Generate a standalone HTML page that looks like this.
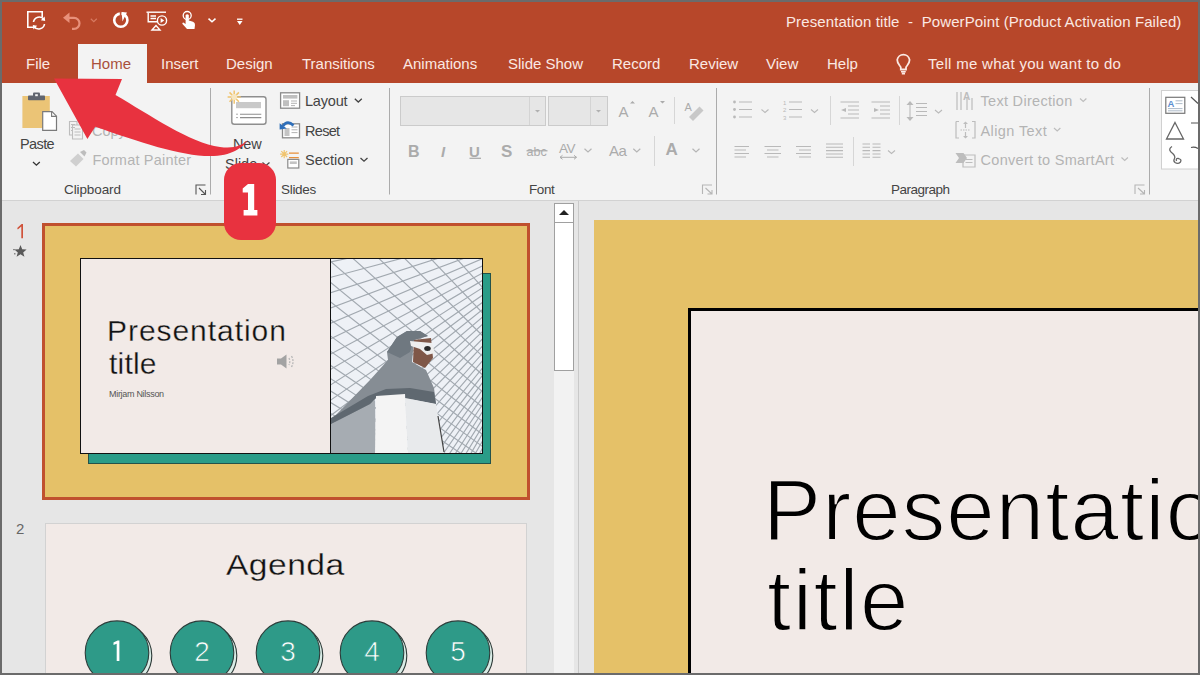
<!DOCTYPE html>
<html><head><meta charset="utf-8">
<style>
*{margin:0;padding:0;box-sizing:border-box}
html,body{width:1200px;height:675px;overflow:hidden;background:#6b6b6b;font-family:"Liberation Sans",sans-serif}
.a{position:absolute;white-space:nowrap}
#title{left:2px;top:2px;width:1196px;height:81px;background:#b7472a}
#hometab{left:78px;top:44px;width:69px;height:39px;background:#f3f3f3}
.tab{top:55px;font-size:15px;color:#fbe9e3;line-height:18px}
#ribbon{left:2px;top:83px;width:1196px;height:118px;background:#f3f3f3;border-bottom:1px solid #d2d2d2}
#panel{left:2px;top:201px;width:1196px;height:472px;background:#e6e6e6}
.rt{font-size:14.5px;color:#444;line-height:17px}
.dis{color:#b4b4b4}
.gl{font-size:13px;color:#444;line-height:16px}
.sep{width:1px;background:#c8c8c8}
.thumbtxt{font-family:"Liberation Sans",sans-serif;color:#111;-webkit-text-stroke:0.3px #f2eae7}
</style></head><body>
<!-- title bar -->
<div class="a" id="title"></div>
<div class="a" id="hometab"></div>
<div class="a tab" style="left:26px">File</div>
<div class="a tab" style="left:91px;color:#a9503c">Home</div>
<div class="a tab" style="left:161px">Insert</div>
<div class="a tab" style="left:226px">Design</div>
<div class="a tab" style="left:302px">Transitions</div>
<div class="a tab" style="left:403px">Animations</div>
<div class="a tab" style="left:508px">Slide Show</div>
<div class="a tab" style="left:612px">Record</div>
<div class="a tab" style="left:689px">Review</div>
<div class="a tab" style="left:766px">View</div>
<div class="a tab" style="left:827px">Help</div>
<svg class="a" style="left:890px;top:50px" width="26" height="30" fill="none" stroke="#fbe9e3" stroke-width="1.4"><path d="M10.8 19.5 V17.5 C10.8 16 7.2 14.5 7.2 9.8 A6.3 6.3 0 0 1 19.6 9.8 C19.6 14.5 16 16 16 17.5 V19.5Z" stroke-width="1.8"/><path d="M11 21.8 H15.8 M11.8 23.6 H15" stroke-width="1.6"/></svg>
<div class="a tab" style="left:928px;letter-spacing:0.3px">Tell me what you want to do</div>
<div class="a tab" style="left:786px;top:13px;letter-spacing:0.1px">Presentation title&nbsp; -&nbsp; PowerPoint (Product Activation Failed)</div>

<!-- ribbon -->
<div class="a" id="ribbon"></div>
<div class="a" id="panel"></div>
<!-- ribbon texts -->
<div class="a rt" style="left:20px;top:136px;letter-spacing:-0.6px">Paste</div>
<div class="a rt dis" style="left:92px;top:122.5px">Copy</div>
<div class="a rt dis" style="left:92.5px;top:152px;letter-spacing:0.2px">Format Painter</div>
<div class="a rt" style="left:233px;top:136px;letter-spacing:-0.2px">New</div>
<div class="a rt" style="left:225px;top:155.5px">Slide</div>
<div class="a rt" style="left:305px;top:93px;letter-spacing:-0.2px">Layout</div>
<div class="a rt" style="left:305px;top:122.5px;letter-spacing:-0.7px">Reset</div>
<div class="a rt" style="left:305px;top:152px">Section</div>
<div class="a rt dis" style="left:980.5px;top:93px;letter-spacing:0.3px">Text Direction</div>
<div class="a rt dis" style="left:980.5px;top:122.5px;letter-spacing:0.4px">Align Text</div>
<div class="a rt dis" style="left:980.5px;top:152px;letter-spacing:0.3px">Convert to SmartArt</div>
<div class="a gl" style="left:64px;top:181.7px;font-size:13.5px;letter-spacing:-0.1px">Clipboard</div>
<div class="a gl" style="left:281px;top:181.7px;font-size:13.5px;letter-spacing:-0.3px">Slides</div>
<div class="a gl" style="left:529px;top:181.7px;font-size:13.5px;letter-spacing:-0.4px">Font</div>
<div class="a gl" style="left:891px;top:181.7px;font-size:13.5px;letter-spacing:-0.5px">Paragraph</div>
<!-- icons -->
<svg class="a" style="left:0;top:0" width="1200" height="210" viewBox="0 0 1200 210" fill="none" stroke-linecap="butt">
<!-- QAT -->
<g stroke="#fff" stroke-width="1.6">
 <path d="M34 27.2 H27.8 V11.8 H42.2 V17"/>
 <path d="M33.5 22 A5.8 5.8 0 0 1 44 19.5"/><path d="M44.5 24 A5.8 5.8 0 0 1 34 26.5"/>
</g>
<path d="M44.6 16.5 L45.2 21 L40.8 20.2Z M33.4 29.5 L32.8 25 L37.2 25.8Z" fill="#fff"/>
<g stroke="#e8907a" stroke-width="2.2">
 <path d="M66 17.8 H74 A5.5 5.5 0 0 1 74 28.8 H72"/>
</g>
<path d="M63 17.8 L69.5 12.5 V23Z" fill="#e8907a"/>
<path d="M90.8 18.8 L93.8 21.6 L96.8 18.8" stroke="#d77a62" stroke-width="1.2"/>
<circle cx="120.8" cy="20.2" r="6.6" stroke="#fff" stroke-width="2.6"/>
<path d="M121.5 12 L127 12.5 Q124.5 17 122.5 21.5Z" fill="#fff"/>
<path d="M120.6 11.5 V20.5" stroke="#c2553a" stroke-width="1.6"/>
<g stroke="#fff" stroke-width="1.4">
 <path d="M146.5 12.2 H166"/><path d="M148.2 13 V21.8 H157"/><path d="M150.5 16 H156 M150.5 18.5 H156"/>
 <circle cx="162" cy="20.5" r="4.6"/>
</g>
<path d="M160.6 18 L164.2 20.5 L160.6 23Z" fill="#fff"/>
<path d="M152 30 L156 25.5 L160 30Z" stroke="#fff" stroke-width="1.4"/>
<circle cx="187.2" cy="15.5" r="4" stroke="#fff" stroke-width="1.3"/>
<path d="M185.6 15 Q187.2 13.3 188.8 15 V20.5 L193 21.8 Q195.2 22.6 195 25 L194.5 29 H187 L182.5 24 Q181.8 22.8 183.3 22.6 L185.6 24Z" fill="#fff"/>
<path d="M208.5 18.6 L212 21.8 L215.5 18.6" stroke="#fff" stroke-width="1.5"/>
<path d="M237 19.2 H242.5" stroke="#fff" stroke-width="1.3"/><path d="M237 21 H242.5 L239.75 25Z" fill="#fff"/>
<!-- Paste -->
<rect x="22.4" y="96" width="27.4" height="32" fill="#ebc476"/>
<rect x="28" y="95.6" width="17" height="4.6" rx="0.8" fill="#60646e"/>
<rect x="33" y="92.6" width="7" height="4" rx="1" fill="#60646e"/>
<rect x="35.2" y="94.2" width="2.6" height="2" fill="#f3f3f3"/>
<path d="M42.7 111.6 H52 L56.5 116.2 V130.4 H42.7Z" fill="#fff" stroke="#7a7a7a" stroke-width="1.2"/>
<path d="M51.6 111.6 V116.4 H56.5" stroke="#7a7a7a" stroke-width="1.1"/>
<path d="M33 162 L36.4 165.2 L39.8 162" stroke="#333" stroke-width="1.3"/>
<!-- Copy faded -->
<g stroke="#bdbdbd" stroke-width="1.1">
 <path d="M69.5 121.5 H77 V135 H69.5Z"/><path d="M72.5 125 H82.5 V139 H72.5Z" fill="#f3f3f3"/>
 <path d="M71 124.5 H75 M71 127.5 H75 M71 130.5 H72 M74.5 129 H80.5 M74.5 132 H80.5 M74.5 135 H80.5"/>
</g>
<!-- Format painter faded -->
<path d="M70 161 L78 153.5 L83.5 159 L76 166.5Z" fill="#cfcfcf"/>
<path d="M80 152 L84 150 L86.5 152.5 L84.5 156.5Z" fill="#bdbdbd"/>
<!-- dialog launchers -->
<g stroke="#555" stroke-width="1.1">
 <path d="M196 194.5 V185 H205.5"/><path d="M199 188 L205.5 194.5 M205.5 190 V194.5 H201"/>
</g>
<g stroke="#b5b5b5" stroke-width="1.1">
 <path d="M702.5 194 V185 H712"/><path d="M705.5 188 L712 194 M712 190 V194 H707.5"/>
 <path d="M1135 194 V185 H1144.5"/><path d="M1138 188 L1144.5 194 M1144.5 190 V194 H1140"/>
</g>
<!-- separators -->
<g stroke="#ababab" stroke-width="1">
 <path d="M210.5 88 V194.5"/><path d="M389.5 88 V194.5"/><path d="M716.5 88 V194.5"/><path d="M1149.5 88 V194.5"/>
</g>
<!-- New slide -->
<rect x="231.8" y="96.8" width="34.2" height="27.4" rx="2.5" fill="#fff" stroke="#8e8e8e" stroke-width="1.4"/>
<rect x="236" y="102" width="25" height="6.2" fill="#c9c9c9"/>
<path d="M240 114.2 H261.3 M240 117.6 H261.3" stroke="#8e8e8e" stroke-width="1.1"/>
<path d="M236 114.2 H238 M236 117.6 H238" stroke="#aaa" stroke-width="1"/>
<g stroke="#f0c46e" stroke-width="1.5">
 <path d="M234.2 90.5 V103.7 M227.6 97.1 H240.8 M229.5 92.4 L238.9 101.8 M238.9 92.4 L229.5 101.8"/>
</g>
<circle cx="234.2" cy="97.1" r="3" fill="#f7e6c0"/>
<path d="M262.5 162.5 L266 165.5 L269.5 162.5" stroke="#444" stroke-width="1.2"/>
<!-- Layout -->
<rect x="280.6" y="92.8" width="19" height="15.4" fill="#fff" stroke="#8a8a8a" stroke-width="1.3"/>
<rect x="283" y="95" width="14.4" height="3.6" fill="#bfbfbf"/>
<rect x="283" y="100.2" width="6" height="6" fill="#bfbfbf"/>
<path d="M291 101 H297 M291 103.3 H297 M291 105.6 H295" stroke="#aaa" stroke-width="0.9"/>
<path d="M354.8 98.8 L358.3 102 L361.8 98.8" stroke="#444" stroke-width="1.3"/>
<!-- Reset -->
<rect x="282.5" y="123.8" width="17" height="14" fill="#fff" stroke="#8a8a8a" stroke-width="1.3"/>
<rect x="284.5" y="128" width="5" height="8" fill="#c4c4c4"/>
<path d="M291.5 127 H297.5 M291.5 129.8 H297.5 M291.5 132.6 H297.5" stroke="#aaa" stroke-width="0.9"/>
<path d="M283 126 Q287.5 119.5 293.5 125.5" stroke="#2f6fba" stroke-width="2.6"/>
<path d="M279.6 123.2 L286.8 128.6 L279.6 129.6Z" fill="#2f6fba"/>
<!-- Section -->
<g stroke="#f0c46e" stroke-width="1.2">
 <path d="M284.2 150 V158.2 M280.1 154.1 H288.3 M281.3 151.2 L287.1 157 M287.1 151.2 L281.3 157"/>
</g>
<path d="M289 153.2 H298.8 M289 157.6 H298.8" stroke="#e8903a" stroke-width="1.3"/>
<rect x="287.8" y="159.4" width="11" height="8.6" fill="#fff" stroke="#8a8a8a" stroke-width="1.2"/>
<rect x="289.8" y="161.4" width="7" height="2.6" fill="#c4c4c4"/>
<path d="M360.5 158 L364 161.2 L367.5 158" stroke="#444" stroke-width="1.3"/>
<!-- Font boxes -->
<rect x="400.5" y="96.5" width="145" height="29" fill="#e6e6e6" stroke="#cbcbcb"/>
<path d="M529.5 97 V125" stroke="#d4d4d4"/>
<path d="M535 110 L537.5 112.5 L540 110Z" fill="#b0b0b0"/>
<rect x="548.5" y="96.5" width="59" height="29" fill="#e6e6e6" stroke="#cbcbcb"/>
<path d="M590.5 97 V125" stroke="#d4d4d4"/>
<path d="M596 110 L598.5 112.5 L601 110Z" fill="#b0b0b0"/>
<path d="M674.5 97 V124" stroke="#d6d6d6"/>
<path d="M654.5 136 V166" stroke="#d6d6d6"/>
<path d="M830.5 96 V125 M899.5 96 V125 M853.5 137 V166" stroke="#d6d6d6"/>
<!-- Font icons faded -->
<g fill="#ababab" font-family="Liberation Sans" >
 <text x="618.5" y="116.5" font-size="15">A</text>
 <text x="648.5" y="116.5" font-size="15">A</text>
 <text x="665.5" y="154.8" font-size="17" font-weight="bold">A</text>
 <text x="408" y="156.8" font-size="16" font-weight="bold">B</text>
 <text x="441" y="156.8" font-size="15" font-style="italic" font-weight="bold" font-family="Liberation Sans">I</text>
 <text x="469" y="156.8" font-size="15" font-weight="bold">U</text>
 <text x="501" y="157" font-size="17" font-weight="bold">S</text>
 <text x="526.5" y="155.5" font-size="12.5">abc</text>
 <text x="559" y="152.5" font-size="13.5" letter-spacing="-0.5">AV</text>
 <text x="609" y="155.5" font-size="15" letter-spacing="-0.5">Aa</text>
 <text x="684.5" y="111" font-size="11">A</text>
</g>
<path d="M469.5 158.3 H481" stroke="#ababab" stroke-width="1.3"/>
<path d="M526.5 150.8 H547.5" stroke="#ababab" stroke-width="1.2"/>
<path d="M630 103.5 L632.5 101 L635 103.5Z M660 101 L662.5 103.5 L665 101Z" fill="#ababab"/>
<path d="M560 157.3 H576.5 M560 157.3 L562.5 155.3 M560 157.3 L562.5 159.3 M576.5 157.3 L574 155.3 M576.5 157.3 L574 159.3" stroke="#ababab" stroke-width="1"/>
<path d="M689 117 L699.5 106.5 L703.5 110.5 L693 121Z" fill="#c8c8c8"/>
<g stroke="#b5b5b5" stroke-width="1.2">
 <path d="M584.5 148.8 L588 152 L591.5 148.8"/><path d="M633.3 148.8 L636.8 152 L640.3 148.8"/><path d="M692.5 148.8 L696 152 L699.5 148.8"/>
</g>
<!-- Paragraph icons faded -->
<g stroke="#b9b9b9" stroke-width="1.05">
 <path d="M739 102 H752 M739 109.5 H752 M739 117 H752"/>
 <path d="M789 102 H802 M789 109.5 H802 M789 117 H802"/>
 <path d="M761.5 109.5 L765 112.5 L768.5 109.5 M811 109.5 L814.5 112.5 L818 109.5 M935 110 L938.5 113 L942 110 M888 150.5 L891.5 153.5 L895 150.5"/>
 <path d="M840.5 102 H859 M848 106 H859 M848 110 H859 M848 114 H859 M840.5 118 H859"/>
 <path d="M871.5 102 H890 M880 106 H890 M880 110 H890 M880 114 H890 M871.5 118 H890"/>
 <path d="M916 103.5 H927 M916 107.5 H927 M916 111.5 H927 M916 115.5 H927"/>
 <path d="M734.5 146.5 H749 M734.5 150 H746 M734.5 153.5 H749 M734.5 157 H746"/>
 <path d="M764.5 146.5 H781 M767 150 H778.5 M764.5 153.5 H781 M767 157 H778.5"/>
 <path d="M796 146.5 H811 M799 150 H811 M796 153.5 H811 M799 157 H811"/>
 <path d="M826 144 H843 M826 147.3 H843 M826 150.6 H843 M826 153.9 H843 M826 157.2 H843"/>
 <path d="M862.5 144 H870 M872.5 144 H880.5 M862.5 147.3 H870 M872.5 147.3 H880.5 M862.5 150.6 H870 M872.5 150.6 H880.5 M862.5 153.9 H870 M872.5 153.9 H880.5 M862.5 157.2 H870 M872.5 157.2 H880.5"/>
 <path d="M910 104 V118"/>
</g>
<g fill="#b9b9b9">
 <circle cx="734.5" cy="102" r="1.4"/><circle cx="734.5" cy="109.5" r="1.4"/><circle cx="734.5" cy="117" r="1.4"/>
 <path d="M846 108 L841 110 L846 112Z M874 108 L879 110 L874 112Z M906.5 105 L910 101 L913.5 105Z M906.5 117 L910 121 L913.5 117Z"/>
</g>
<g fill="#b9b9b9" font-family="Liberation Sans" font-size="6">
 <text x="783" y="104.5">1</text><text x="783" y="112">2</text><text x="783" y="119.5">3</text>
</g>
<!-- text direction etc faded -->
<g stroke="#bdbdbd" stroke-width="1.2">
 <path d="M957 92 V110 M961 92 V110 M967 98 V110 M972 98 V110"/>
 <path d="M956 121.5 H959 M956 121.5 V138 H959 M972 121.5 H975 V138 H972"/>
 <path d="M960.5 130 H970.5" stroke-dasharray="1.5 1"/>
 <path d="M965.5 122 V128 M965.5 132 V138"/>
 <path d="M963 155 H975 V167 H963Z"/><path d="M965.5 159.5 H972.5 M965.5 162.5 H972.5"/>
</g>
<g fill="#bdbdbd">
 <text x="963" y="100" font-size="10" font-family="Liberation Sans" font-weight="bold">A</text>
 <path d="M955.5 153 H963.5 L967 158 L963.5 163 H955.5 L959 158Z"/>
 <path d="M963 124 L965.5 121.5 L968 124Z M963 136 L965.5 138.5 L968 136Z"/>
</g>
<path d="M1080 98.5 L1083.2 101.5 L1086.4 98.5 M1054 128 L1057.2 131 L1060.4 128 M1121.5 157.5 L1124.7 160.5 L1127.9 157.5" stroke="#bdbdbd" stroke-width="1.2"/>
<!-- shapes gallery -->
<rect x="1161.5" y="90.5" width="40" height="78.5" fill="#fff" stroke="#d0d0d0"/>
<rect x="1165.8" y="97.3" width="19" height="16" fill="#fff" stroke="#777" stroke-width="1.2"/>
<text x="1167.5" y="106.5" font-family="Liberation Sans" font-weight="bold" font-size="9.5" fill="#5b8fd0">A</text>
<path d="M1175.5 100.8 H1182.5 M1175.5 103.6 H1182.5 M1168 108.6 H1182.5 M1168 110.8 H1182.5" stroke="#9ab" stroke-width="0.8"/>
<path d="M1175 122.5 L1183.5 139 H1166.5Z" stroke="#666" stroke-width="1.3" stroke-linejoin="miter"/>
<path d="M1172 146.5 Q1168 149 1171 152 Q1176 156 1174.5 158.5 Q1173 161 1175 162.5 Q1178 164.5 1180.5 162 Q1182 159.5 1178.5 158.5 Q1175.5 158 1176.5 161" stroke="#666" stroke-width="1.3"/>
<path d="M1191 97 L1198 103.5 M1191 123 H1198 M1191 147.5 Q1194.5 146.5 1198 148.5" stroke="#555" stroke-width="1.2"/>
</svg>
<!-- slide panel -->
<svg class="a" style="left:0;top:200px" width="40" height="45"><path d="M17.2 28 L21.6 24 H23 V38.2 H21.3 V26.6 L17.8 29.4Z" fill="#d0533b"/></svg>
<svg class="a" style="left:12px;top:243px" width="16" height="16" viewBox="0 0 16 16"><path d="M8.5 2 L10.2 6.3 L14.6 6.5 L11.2 9.4 L12.4 13.8 L8.5 11.3 L4.6 13.8 L5.8 9.4 L2.4 6.5 L6.8 6.3Z" fill="#595959"/><rect x="1" y="6" width="2" height="1.2" fill="#888"/><rect x="2" y="10" width="1.5" height="1.5" fill="#888"/></svg>
<div class="a" style="left:42px;top:223px;width:488px;height:277px;border:3px solid #c0502e;background:#e5c168"></div>
<div class="a" style="left:88px;top:273px;width:403px;height:191px;background:#2a9c88;border:1px solid #24524a"></div>
<div class="a" style="left:80px;top:258px;width:403px;height:196px;background:#f2eae7;border:1px solid #111"></div>
<svg class="a" style="left:330px;top:258px" width="153" height="196" viewBox="330 258 153 196">
<defs><clipPath id="pc"><rect x="331" y="259" width="151" height="194"/></clipPath></defs>
<g clip-path="url(#pc)">
<rect x="330" y="258" width="153" height="196" fill="#eef1f6"/>
<path d="M320 152.8 L620 200 M320 168.8 L620 200 M320 184.7 L620 200 M320 200.6 L620 200 M320 216.5 L620 200 M320 232.4 L620 200 M320 248.3 L620 200 M320 264.2 L620 200 M320 280.2 L620 200 M320 296.1 L620 200 M320 312.0 L620 200 M320 327.9 L620 200 M320 343.8 L620 200 M320 359.7 L620 200 M320 375.6 L620 200 M320 391.6 L620 200 M320 407.5 L620 200 M320 423.4 L620 200 M320 439.3 L620 200 M320 455.2 L620 200 M320 471.1 L620 200 M320 487.0 L620 200 M320 502.9 L620 200 M320 518.9 L620 200 M320 534.8 L620 200 M320 550.7 L620 200 M320 566.6 L620 200 M320 582.5 L620 200 M320 598.4 L620 200 M320 614.3 L620 200 M320 630.3 L620 200 M320 646.2 L620 200 M320 662.1 L620 200 M320 678.0 L620 200 M320 693.9 L620 200 M320 709.8 L620 200 M320 725.7 L620 200 M320 741.7 L620 200 M320 757.6 L620 200 M320 773.5 L620 200 M320 789.4 L620 200 M320 805.3 L620 200 M320 821.2 L620 200 M320 837.1 L620 200 M320 853.0 L620 200 M320 869.0 L620 200 M320 884.9 L620 200 M320 900.8 L620 200" stroke="#a2a9b0" stroke-width="1.15"/>
<path d="M-16.1 240 L900 750 M10.7 240 L900 750 M37.5 240 L900 750 M64.3 240 L900 750 M91.2 240 L900 750 M118.0 240 L900 750 M144.8 240 L900 750 M171.6 240 L900 750 M198.4 240 L900 750 M225.2 240 L900 750 M252.0 240 L900 750 M278.8 240 L900 750 M305.7 240 L900 750 M332.5 240 L900 750 M359.3 240 L900 750 M386.1 240 L900 750 M412.9 240 L900 750 M439.7 240 L900 750 M466.5 240 L900 750 M493.3 240 L900 750 M520.2 240 L900 750 M547.0 240 L900 750 M573.8 240 L900 750 M600.6 240 L900 750" stroke="#a2a9b0" stroke-width="1.15"/>
<path d="M331 424 L375 400 L376 453 L331 453Z" fill="#a6acb2"/>
<path d="M387 352 L397 337 L407 331 L420 331 L428 336 L414 340 L412 362 L426 370 L434 388 L436 404 L410 399 L378 396 L370 404 L331 424 L331 420 L370 380 L388 360Z" fill="#868d94"/>
<path d="M331 424 L370 404 L378 396 L410 399 L436 404 L434 392 L410 388 L386 389 L368 396 L331 418Z" fill="#5f6870"/>
<path d="M387 352 L397 337 L407 331 L420 331 L428 336 L414 340 L410 352 L400 358Z" fill="#6f7880"/>
<path d="M414 340 L431 338 L433 358 L425 368 L413 362Z" fill="#7f5748"/>
<path d="M410 341 L432 343 L435 353 L427 355 L420 349 L411 346Z" fill="#eeeeee"/>
<ellipse cx="427.5" cy="348.5" rx="3.3" ry="2.5" fill="#2a2a2a"/>
<path d="M376 396 L405 394 L408 453 L375 453Z" fill="#f4f4f4"/>
<path d="M405 398 L436 404 L444 453 L408 453Z" fill="#e8eaec"/>
<path d="M438 416 L444 452" stroke="#444" stroke-width="1.2"/>
</g>
<rect x="330.5" y="258.5" width="152" height="195" fill="none" stroke="#111" stroke-width="1"/>
</svg>
<div class="a thumbtxt" style="left:107px;top:314px;font-size:30px;line-height:33px;letter-spacing:0.95px">Presentation</div>
<div class="a thumbtxt" style="left:109px;top:346.5px;font-size:30px;line-height:33px;letter-spacing:0.2px">title</div>
<div class="a" style="left:109px;top:389px;font-size:9px;color:#555;line-height:10px;letter-spacing:-0.3px">Mirjam Nilsson</div>
<div class="a" style="left:16px;top:520px;font-size:15px;color:#666;line-height:17px">2</div>
<div class="a" style="left:45px;top:523px;width:482px;height:160px;background:#f2eae7;border:1px solid #d2d2d2"></div>
<div class="a thumbtxt" style="left:226px;top:548px;font-size:30px;line-height:33px;letter-spacing:0.4px;transform:scaleX(1.12);transform-origin:0 0">Agenda</div>
<svg class="a" style="left:0;top:600px" width="540" height="75"><circle cx="120" cy="55.5" r="31.8" fill="#d9ece6" stroke="#2d3a38" stroke-width="1.1"/><circle cx="117" cy="52.7" r="31.8" fill="#2e9a88" stroke="#2b3d3a" stroke-width="1.1"/><path d="M113.5 42.5 L117.6 40.5 H119.4 V61 H116.7 V43.8 L113.5 45Z" fill="#fff"/><circle cx="205" cy="55.5" r="31.8" fill="#d9ece6" stroke="#2d3a38" stroke-width="1.1"/><circle cx="202" cy="52.7" r="31.8" fill="#2e9a88" stroke="#2b3d3a" stroke-width="1.1"/><text x="202" y="61" text-anchor="middle" font-family="Liberation Sans" font-size="28" fill="#fff" stroke="#2e9a88" stroke-width="0.7">2</text><circle cx="291" cy="55.5" r="31.8" fill="#d9ece6" stroke="#2d3a38" stroke-width="1.1"/><circle cx="288" cy="52.7" r="31.8" fill="#2e9a88" stroke="#2b3d3a" stroke-width="1.1"/><text x="288" y="61" text-anchor="middle" font-family="Liberation Sans" font-size="28" fill="#fff" stroke="#2e9a88" stroke-width="0.7">3</text><circle cx="375" cy="55.5" r="31.8" fill="#d9ece6" stroke="#2d3a38" stroke-width="1.1"/><circle cx="372" cy="52.7" r="31.8" fill="#2e9a88" stroke="#2b3d3a" stroke-width="1.1"/><text x="372" y="61" text-anchor="middle" font-family="Liberation Sans" font-size="28" fill="#fff" stroke="#2e9a88" stroke-width="0.7">4</text><circle cx="461" cy="55.5" r="31.8" fill="#d9ece6" stroke="#2d3a38" stroke-width="1.1"/><circle cx="458" cy="52.7" r="31.8" fill="#2e9a88" stroke="#2b3d3a" stroke-width="1.1"/><text x="458" y="61" text-anchor="middle" font-family="Liberation Sans" font-size="28" fill="#fff" stroke="#2e9a88" stroke-width="0.7">5</text></svg>
<svg class="a" style="left:275px;top:352px" width="22" height="20"><path d="M2 6.5 H6 L11.5 2.5 V16.5 L6 12.5 H2Z" fill="#a3a3a3"/><path d="M14 6 Q15.5 9.5 14 13 M16.5 4 Q19.5 9.5 16.5 15" stroke="#b8b8b8" stroke-width="1.3" fill="none" stroke-dasharray="2 1.2"/></svg>
<!-- scrollbar -->
<div class="a" style="left:554px;top:203px;width:20px;height:470px;background:#f2f2f2"></div>
<div class="a" style="left:554px;top:203px;width:20px;height:168px;background:#fff;border:1px solid #a0a0a0"></div>
<div class="a" style="left:554px;top:222px;width:20px;height:1px;background:#a0a0a0"></div>
<svg class="a" style="left:558px;top:207px" width="12" height="12"><path d="M1 8 L6 3 L11 8Z" fill="#222"/></svg>
<div class="a" style="left:578px;top:201px;width:1px;height:472px;background:#c9c9c9"></div>
<!-- main slide -->
<div class="a" style="left:594px;top:220px;width:604px;height:453px;background:#e5c168"></div>
<div class="a" style="left:688px;top:308px;width:520px;height:400px;background:#f2eae7;border:3px solid #000"></div>
<div class="a thumbtxt" style="left:763px;top:464.5px;font-size:87px;line-height:90px;letter-spacing:1.1px;color:#000;-webkit-text-stroke:1.8px #f2eae7">Presentation</div>
<div class="a thumbtxt" style="left:767px;top:555px;font-size:87px;line-height:90px;letter-spacing:1.5px;color:#000;-webkit-text-stroke:1.8px #f2eae7">title</div>

<!-- arrow + badge -->
<svg class="a" style="left:0;top:0" width="1200" height="675" viewBox="0 0 1200 675">
<path d="M54 78.5 L122 79 L115.5 95 C150 115 190 143 220 147 C235 149 242 145 248 140 C242 148 232 156 210 156 C180 156 140 142 95.2 126.7 L87.4 138.9 Z" fill="#e8323f"/>
</svg>
<div class="a" style="left:224px;top:163px;width:52px;height:77px;border-radius:17px;background:#e8323f"></div>
<svg class="a" style="left:0;top:0" width="300" height="250"><path d="M242.7 188.6 L248 184 H254.2 V210 H257.4 V215.6 H243.6 V210 H248 V192.6 H242.7Z" fill="#fff"/></svg>
<div class="a" style="left:0;top:0;width:1200px;height:675px;border:2px solid #6b6b6b"></div>
</body></html>
